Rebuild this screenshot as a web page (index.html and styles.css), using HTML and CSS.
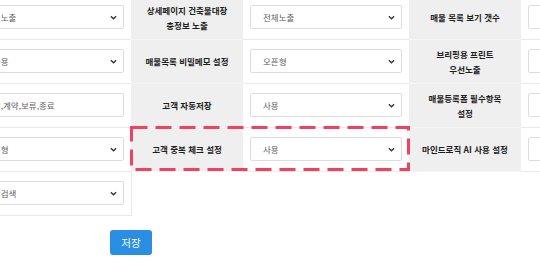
FILE: index.html
```html
<!DOCTYPE html>
<html lang="ko">
<head>
  <meta charset="UTF-8" />
  <meta name="viewport" content="width=device-width, initial-scale=1.0" />
  <title>환경설정</title>
  <link rel="stylesheet" href="styles.css">
</head>
<body>
  <div class="settings">
    <table class="setting-table">
      <colgroup>
        <col class="col-value" />
        <col class="col-label" />
        <col class="col-value" />
        <col class="col-label" />
        <col class="col-value" />
      </colgroup>
      <tbody>
        <tr>
          <td><div class="select"><span>전체노출</span><svg class="chev" viewBox="0 0 8 5"><path d="M1 1l3 3 3-3" /></svg></div></td>
          <th>상세페이지 건축물대장<br>충정보 노출</th>
          <td><div class="select"><span>전체노출</span><svg class="chev" viewBox="0 0 8 5"><path d="M1 1l3 3 3-3" /></svg></div></td>
          <th>매물 목록 보기 갯수</th>
          <td><div class="select"><span>20개</span><svg class="chev" viewBox="0 0 8 5"><path d="M1 1l3 3 3-3" /></svg></div></td>
        </tr>
        <tr>
          <td><div class="select"><span>미사용</span><svg class="chev" viewBox="0 0 8 5"><path d="M1 1l3 3 3-3" /></svg></div></td>
          <th>매물목록 비밀메모 설정</th>
          <td><div class="select"><span>오픈형</span><svg class="chev" viewBox="0 0 8 5"><path d="M1 1l3 3 3-3" /></svg></div></td>
          <th>브리핑용 프린트<br>우선노출</th>
          <td><div class="select"><span>사용</span><svg class="chev" viewBox="0 0 8 5"><path d="M1 1l3 3 3-3" /></svg></div></td>
        </tr>
        <tr>
          <td><div class="select input"><span>진행,계약,보류,종료</span></div></td>
          <th>고객 자동저장</th>
          <td><div class="select"><span>사용</span><svg class="chev" viewBox="0 0 8 5"><path d="M1 1l3 3 3-3" /></svg></div></td>
          <th>매물등록폼 필수항목<br>설정</th>
          <td><div class="select"><span>사용</span><svg class="chev" viewBox="0 0 8 5"><path d="M1 1l3 3 3-3" /></svg></div></td>
        </tr>
        <tr>
          <td><div class="select"><span>오픈형</span><svg class="chev" viewBox="0 0 8 5"><path d="M1 1l3 3 3-3" /></svg></div></td>
          <th class="marked">
            고객 중복 체크 설정
            <svg class="mark" width="280" height="45" viewBox="0 0 280 45"><rect x="1.5" y="1.5" width="277" height="42" /></svg>
          </th>
          <td><div class="select"><span>사용</span><svg class="chev" viewBox="0 0 8 5"><path d="M1 1l3 3 3-3" /></svg></div></td>
          <th>마인드로직 AI 사용 설정</th>
          <td><div class="select"><span>사용</span><svg class="chev" viewBox="0 0 8 5"><path d="M1 1l3 3 3-3" /></svg></div></td>
        </tr>
        <tr>
          <td class="last"><div class="select"><span>통합검색</span><svg class="chev" viewBox="0 0 8 5"><path d="M1 1l3 3 3-3" /></svg></div></td>
        </tr>
      </tbody>
    </table>
    <div class="actions">
      <button class="btn-save">저장</button>
    </div>
  </div>
</body>
</html>
```

FILE: styles.css
```css
body {
  margin: 0;
  background: #fff;
  font-family: "Noto Sans CJK KR", "Noto Sans", sans-serif;
  color: #222;
  overflow: hidden;
}
.settings {
  width: 722px;
  margin: -4px 0 0 -35px;
}
.setting-table {
  width: 722px;
  table-layout: fixed;
  border-collapse: collapse;
}
.col-value {
  width: 166px;
}
.col-label {
  width: 112px;
}
.setting-table td,
.setting-table th {
  height: 43px;
  padding: 9px 7px 10px;
  box-sizing: border-box;
  border-bottom: 1px solid #e9e9e9;
  vertical-align: middle;
}
.setting-table th {
  background-color: #efefef;
  border-bottom-color: #f6f6f6;
  padding: 0 6px;
  font-size: 8.5px;
  font-weight: 700;
  line-height: 15px;
  text-align: center;
  color: #1e1e1e;
}
.setting-table td.last {
  border-right: 1px solid #e9e9e9;
}
.select {
  display: flex;
  align-items: center;
  justify-content: space-between;
  height: 24px;
  padding: 0 6px 0 12px;
  box-sizing: border-box;
  border: 1px solid #ddd;
  border-radius: 2px;
  background: #fff;
  font-size: 8.5px;
  color: #5e5e5e;
  white-space: nowrap;
}
.chev {
  width: 7px;
  height: 5px;
  fill: none;
  stroke: #333;
  stroke-width: 1.5;
}
.marked {
  position: relative;
}
.mark {
  position: absolute;
  left: -1px;
  top: -2px;
}
.mark rect {
  fill: none;
  stroke: #f0415f;
  stroke-width: 3;
  stroke-dasharray: 16 8;
}
.actions {
  padding: 14px 0 15px 145px;
  border-bottom: 1px solid #ececec;
}
.btn-save {
  display: block;
  width: 42px;
  height: 25px;
  padding: 0;
  font-family: inherit;
  font-size: 10.5px;
  background-color: #2a8ee2;
  color: #fff;
  border: none;
  border-radius: 3px;
  cursor: pointer;
}
```
